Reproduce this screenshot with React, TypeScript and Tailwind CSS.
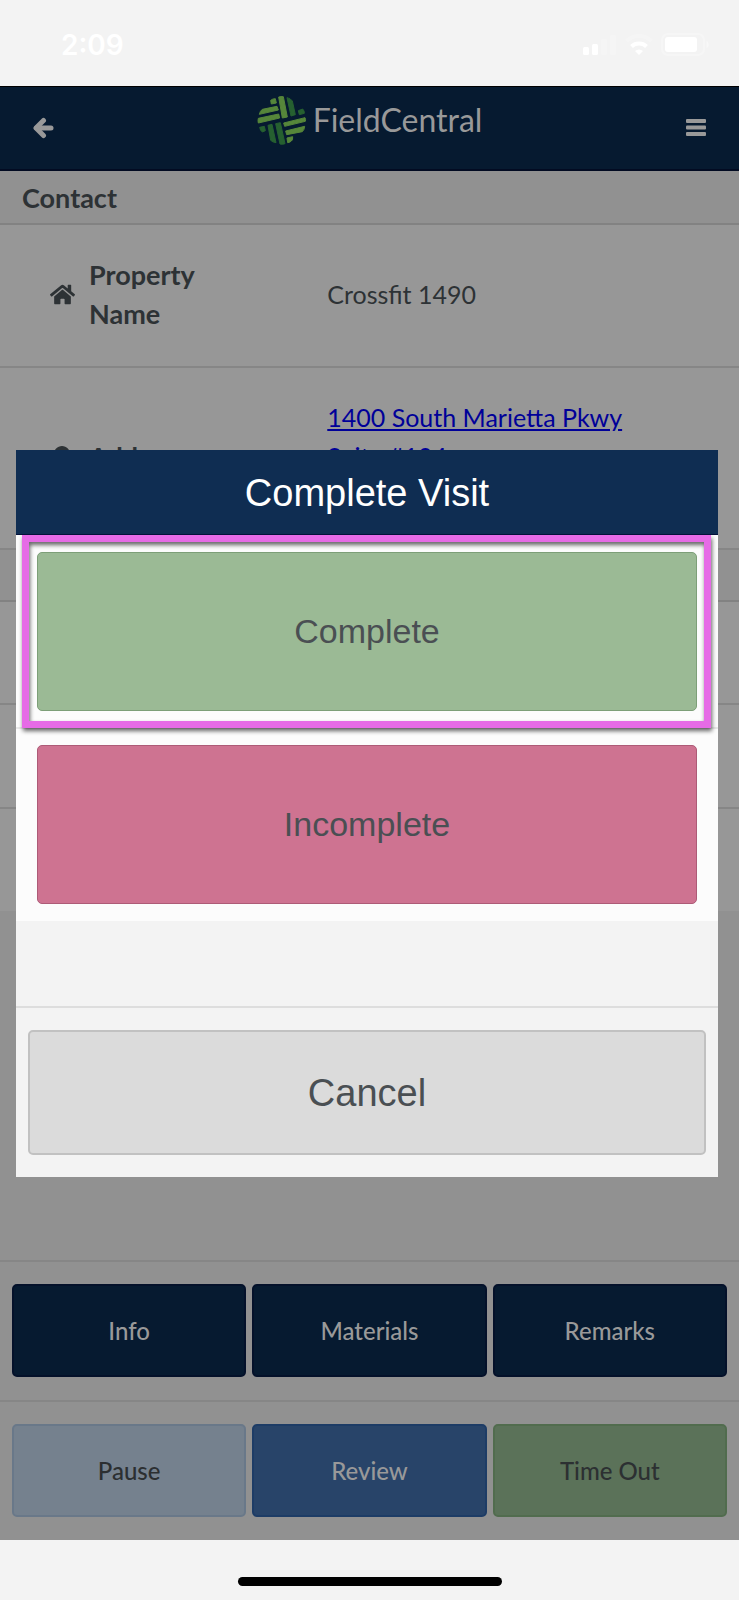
import type { ReactNode } from 'react'
import { FaHome, FaMapMarkerAlt } from 'react-icons/fa'

type Action = {
  label: string
  className: string
}

const tabs: Action[] = [
  { label: 'Info', className: 'border-[#04112a] bg-[#061a30] text-[#999999]' },
  { label: 'Materials', className: 'border-[#04112a] bg-[#061a30] text-[#999999]' },
  { label: 'Remarks', className: 'border-[#04112a] bg-[#061a30] text-[#999999]' },
]

const actions: Action[] = [
  { label: 'Pause', className: 'border-[#697889] bg-[#75818e] text-[#2c2f31]' },
  { label: 'Review', className: 'border-[#1d3c66] bg-[#284469] text-[#999999]' },
  { label: 'Time Out', className: 'border-[#516c4e] bg-[#5b7259] text-[#2c3032]' },
]

function StatusBar() {
  return (
    <div className="flex h-[86px] items-center justify-between bg-[#f3f3f3] pl-[61px] pr-[30px] pt-1 text-white">
      <span className="font-['Inter',sans-serif] text-[28px] font-semibold leading-8">2:09</span>

      <svg width="126" height="24" viewBox="0 0 126 24" fill="currentColor" aria-hidden="true">
        <rect x="0" y="14" width="6" height="8" rx="1.5" />
        <rect x="9" y="11" width="6" height="11" rx="1.5" />
        <rect x="18" y="6" width="6" height="16" rx="1.5" opacity="0.2" />
        <rect x="27" y="2" width="6" height="20" rx="1.5" opacity="0.2" />
        <g fill="none" stroke="currentColor">
          <path d="M43.500 8a18 18 0 0 1 25 0" strokeWidth="4" opacity="0.2" />
          <path d="M48.500 13.500a11 11 0 0 1 15 0" strokeWidth="4" />
        </g>
        <path d="M56 22l-4-4a6 6 0 0 1 8 0z" />
        <rect x="79" y="1" width="42" height="21" rx="6" fill="none" stroke="currentColor" strokeWidth="2" opacity="0.3" />
        <rect x="82" y="4" width="32" height="15" rx="3" />
        <path d="M123.500 8c3 1 3 6 0 7z" opacity="0.4" />
      </svg>
    </div>
  )
}

function LogoMark() {
  return (
    <svg width="50" height="51" viewBox="0 0 150 153" strokeWidth="3" strokeLinejoin="round" aria-hidden="true">
      <g fill="#56863a" stroke="#56863a">
        <path d="M41 16Q47 11 55 11L58 24L43 27Z" />
        <path d="M65 6Q72 4 79 5L91 66L76 69Z" />
        <path d="M7 58Q9 48 16 43L60 34L64 45Z" />
        <path d="M4 70L65 57L68 69L4 84Q2 77 4 70Z" />
        <path d="M80 84L144 68Q147 74 145 79L83 94Z" />
        <path d="M86 108L143 94Q142 105 136 110L89 119Z" />
        <path d="M90 129L107 125Q108 136 103 138Q98 143 92 143Z" />
      </g>
      <g fill="#266030" stroke="#266030">
        <path d="M90 8Q101 10 106 18L115 59L102 63Z" />
        <path d="M124 47L137 42Q143 48 142 55L127 59Z" />
        <path d="M8 97L22 94L25 107L16 111Q9 106 8 97Z" />
        <path d="M33 91L45 88L57 143Q47 142 41 136Z" />
        <path d="M56 86L70 83L84 146Q76 149 69 147Z" />
      </g>
    </svg>
  )
}

function Header() {
  return (
    <header className="flex h-[85px] items-center justify-between border-b-2 border-t border-b-[#020b22] border-t-black bg-[#061a30] px-8 text-[#999999]">
      <button type="button" aria-label="Back">
        <svg width="22" height="22" viewBox="0 0 22 22" fill="none" stroke="currentColor" strokeWidth="5" strokeLinecap="round" strokeLinejoin="round" aria-hidden="true">
          <path d="M11.500 3.500L4 11l7.500 7.500" />
          <path d="M4.500 11h14.500" />
        </svg>
      </button>

      <div className="flex items-center gap-1.5 pb-4">
        <LogoMark />
        <span className="font-['Lato',sans-serif] text-[32px] leading-10">FieldCentral</span>
      </div>

      <button type="button" aria-label="Menu">
        <svg width="22" height="20" viewBox="0 0 22 20" fill="currentColor" aria-hidden="true">
          <rect x="1" y="1" width="20" height="4" rx="1" />
          <rect x="1" y="7.5" width="20" height="4" rx="1" />
          <rect x="1" y="14" width="20" height="4" rx="1" />
        </svg>
      </button>
    </header>
  )
}

function DetailRow({ icon, label, children }: { icon: ReactNode; label: string; children: ReactNode }) {
  return (
    <div className="grid grid-cols-[31fr_39fr] items-center border-b-2 border-[#868686] bg-[#979797] pb-[33px] pt-[30px]">
      <dt className="flex items-center gap-3.5 pl-[49px] text-[27px] font-bold">
        <span className="flex w-[26px] shrink-0 justify-center">{icon}</span>
        <span className="w-32">{label}</span>
      </dt>
      <dd className="text-[25px]">{children}</dd>
    </div>
  )
}

function ButtonRow({ items }: { items: Action[] }) {
  return (
    <div className="grid grid-cols-3 gap-1.5 border-t-2 border-[#868686] px-3 pb-[23px] pt-[22px]">
      {items.map((item) => (
        <button
          key={item.label}
          type="button"
          className={`h-[93px] rounded-[5px] border-2 font-medium ${item.className}`}
        >
          {item.label}
        </button>
      ))}
    </div>
  )
}

function CompleteVisitDialog() {
  return (
    <div
      role="dialog"
      aria-labelledby="dialog-title"
      className="absolute left-4 right-[21px] top-[364px] bg-[#f3f3f3] font-['Liberation_Sans',Arial,sans-serif] text-[#4a4f53]"
    >
      <h2
        id="dialog-title"
        className="flex h-[85px] items-center justify-center border-b border-[#04123a] bg-[#0f2d52] pt-0.5 text-[38px] text-white"
      >
        Complete Visit
      </h2>

      <div className="relative border-b-2 border-[#e8e8e8] bg-[#fcfcfc] px-[21px] pb-4 pt-[17px]">
        <button type="button" className="h-[159px] w-full rounded-[5px] border border-[#7d9f78] bg-[#9bba95] text-[34px]">
          Complete
        </button>
        <div className="pointer-events-none absolute -bottom-px left-1.5 right-[7px] top-0 border-[7px] border-[#e66be6] drop-shadow-[1px_3px_2px_rgba(0,0,0,0.6)]" />
      </div>

      <div className="bg-[#fcfcfc] px-[21px] pb-[17px] pt-4">
        <button type="button" className="h-[159px] w-full rounded-[5px] border border-[#ad5b77] bg-[#ce7391] text-[34px]">
          Incomplete
        </button>
      </div>

      <div className="mt-[85px] border-t-2 border-[#dddddd] px-3 py-[22px]">
        <button type="button" className="h-[125px] w-full rounded-[5px] border-2 border-[#c1c1c1] bg-[#dbdbdb] pt-0.5 text-[38px]">
          Cancel
        </button>
      </div>
    </div>
  )
}

export default function App() {
  return (
    <div className="bg-[#f3f3f3]">
      <StatusBar />

      <div className="relative bg-[#919191] font-['Lato',sans-serif] text-[24px] leading-[39px] text-[#2d3235]">
        <Header />

        <main>
          <h1 className="flex h-[54px] items-center border-b-2 border-[#828282] px-[22px] text-[27px] font-bold">
            Contact
          </h1>

          <dl>
            <DetailRow icon={<FaHome size={25} />} label="Property Name">
              Crossfit 1490
            </DetailRow>
            <DetailRow icon={<FaMapMarkerAlt size={22} />} label="Address">
              <div className="min-h-[117px]">
                <a href="#map" className="text-[#000099] underline">
                  1400 South Marietta Pkwy
                  <br />
                  Suite #104
                </a>
              </div>
            </DetailRow>
          </dl>

          <div className="h-[52px] border-b-2 border-[#828282]" />
          <div className="h-[103px] border-b-2 border-[#868686] bg-[#979797]" />
          <div className="h-[104px] border-b-2 border-[#868686] bg-[#979797]" />
          <div className="h-[102px] bg-[#979797]" />
        </main>

        <nav aria-label="Visit" className="pt-[349px]">
          <ButtonRow items={tabs} />
          <ButtonRow items={actions} />
        </nav>

        <CompleteVisitDialog />
      </div>

      <div className="flex h-[60px] items-center justify-center pt-[22px]">
        <div className="h-[9px] w-[264px] rounded-full bg-black" />
      </div>
    </div>
  )
}
